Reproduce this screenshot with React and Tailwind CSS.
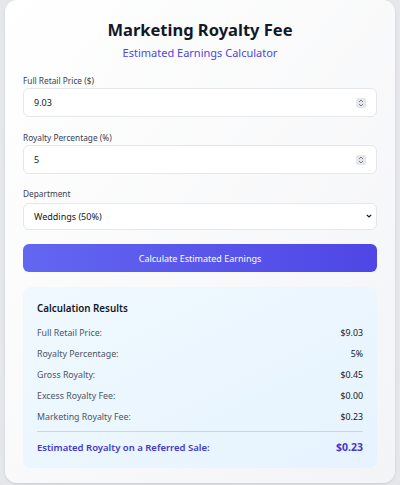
import React, { useState } from 'react';

const departments = [
  { label: 'Weddings (50%)', share: 0.5 },
  { label: 'Events (40%)', share: 0.4 },
  { label: 'Corporate (30%)', share: 0.3 },
];

const fmt = (n) => '$' + n.toFixed(2);

// small stepper glyph drawn inside number fields
const Stepper = () => (
  <span className="flex h-[10px] w-[10px] items-center justify-center rounded-[2px] bg-[#e5e7eb]">
    <svg width="6" height="8" viewBox="0 0 6 8" fill="none" stroke="#6b7280" strokeWidth="0.9">
      <path d="M1 3 L3 1 L5 3" />
      <path d="M1 5 L3 7 L5 5" />
    </svg>
  </span>
);

const Field = ({ label, value, onChange, className = '' }) => (
  <div className={className}>
    <label className="block text-[8.3px] leading-[12px] text-[#374151] mb-[1px]">{label}</label>
    <div className="flex h-[29px] items-center rounded-md border border-[#e5e7eb] bg-white pl-[10px] pr-[10px]">
      <input
        type="text"
        value={value}
        onChange={(e) => onChange(e.target.value)}
        className="w-full bg-transparent text-[9px] text-[#111827] outline-none"
      />
      <Stepper />
    </div>
  </div>
);

const Row = ({ label, value }) => (
  <div className="flex h-[21px] items-center justify-between text-[8.8px]">
    <span className="text-[#4b5563]">{label}</span>
    <span className="text-[#111827]">{value}</span>
  </div>
);

export default function App() {
  const [price, setPrice] = useState('9.03');
  const [pct, setPct] = useState('5');
  const [dept, setDept] = useState(0);

  const p = parseFloat(price) || 0;
  const r = parseFloat(pct) || 0;
  const gross = (p * r) / 100;
  const excess = 0;
  const marketing = Math.round(gross * departments[dept].share * 100) / 100;

  return (
    <div className="min-h-screen bg-[#e5e7eb] px-[5px]" style={{ fontFamily: '"Noto Sans", "Open Sans", sans-serif' }}>
      <div className="h-[483px] rounded-xl bg-gradient-to-br from-white to-[#f3f4f6] px-[18px] pt-[18px] shadow-sm">
        <h1 className="text-center text-[16.5px] font-bold leading-[24px] text-[#111827]">Marketing Royalty Fee</h1>
        <p className="mt-[2px] text-center text-[11px] leading-[18px] text-[#4f46e5]">Estimated Earnings Calculator</p>

        <Field label="Full Retail Price ($)" value={price} onChange={setPrice} className="mt-[13px]" />
        <Field label="Royalty Percentage (%)" value={pct} onChange={setPct} className="mt-[15px]" />

        <div className="mt-[14px]">
          <label className="block text-[8.3px] leading-[12px] text-[#374151] mb-[2px]">Department</label>
          <div className="relative">
            <select
              value={dept}
              onChange={(e) => setDept(Number(e.target.value))}
              className="h-[27px] w-full appearance-none rounded-md border border-[#e5e7eb] bg-white pl-[10px] text-[9px] text-[#111827] outline-none"
            >
              {departments.map((d, i) => (
                <option key={d.label} value={i}>{d.label}</option>
              ))}
            </select>
            <svg className="pointer-events-none absolute right-[5px] top-[12px]" width="6" height="4" viewBox="0 0 6 4" fill="none" stroke="#111827" strokeWidth="1.2">
              <path d="M0.8 0.8 L3 3 L5.2 0.8" />
            </svg>
          </div>
        </div>

        <button
          type="button"
          className="mt-[14px] h-[28px] w-full rounded-md bg-gradient-to-r from-[#6366f1] to-[#4f46e5] text-[9px] text-white"
        >
          Calculate Estimated Earnings
        </button>

        <div className="mt-[15px] h-[181px] rounded-lg bg-gradient-to-br from-[#f0f9ff] to-[#e6f3fe] px-[14px] pt-[14px]">
          <h2 className="text-[9.8px] font-semibold leading-[16px] text-[#111827]">Calculation Results</h2>
          <div className="mt-[6px]">
            <Row label="Full Retail Price:" value={fmt(p)} />
            <Row label="Royalty Percentage:" value={r + '%'} />
            <Row label="Gross Royalty:" value={fmt(gross)} />
            <Row label="Excess Royalty Fee:" value={fmt(excess)} />
            <Row label="Marketing Royalty Fee:" value={fmt(marketing)} />
          </div>
          <div className="mt-[3px] flex h-[26px] items-center justify-between border-t border-[#d1d5db] pt-[6px] text-[#4338ca]">
            <span className="text-[9.5px] font-semibold">Estimated Royalty on a Referred Sale:</span>
            <span className="text-[10.5px] font-bold">{fmt(marketing)}</span>
          </div>
        </div>
      </div>
    </div>
  );
}
